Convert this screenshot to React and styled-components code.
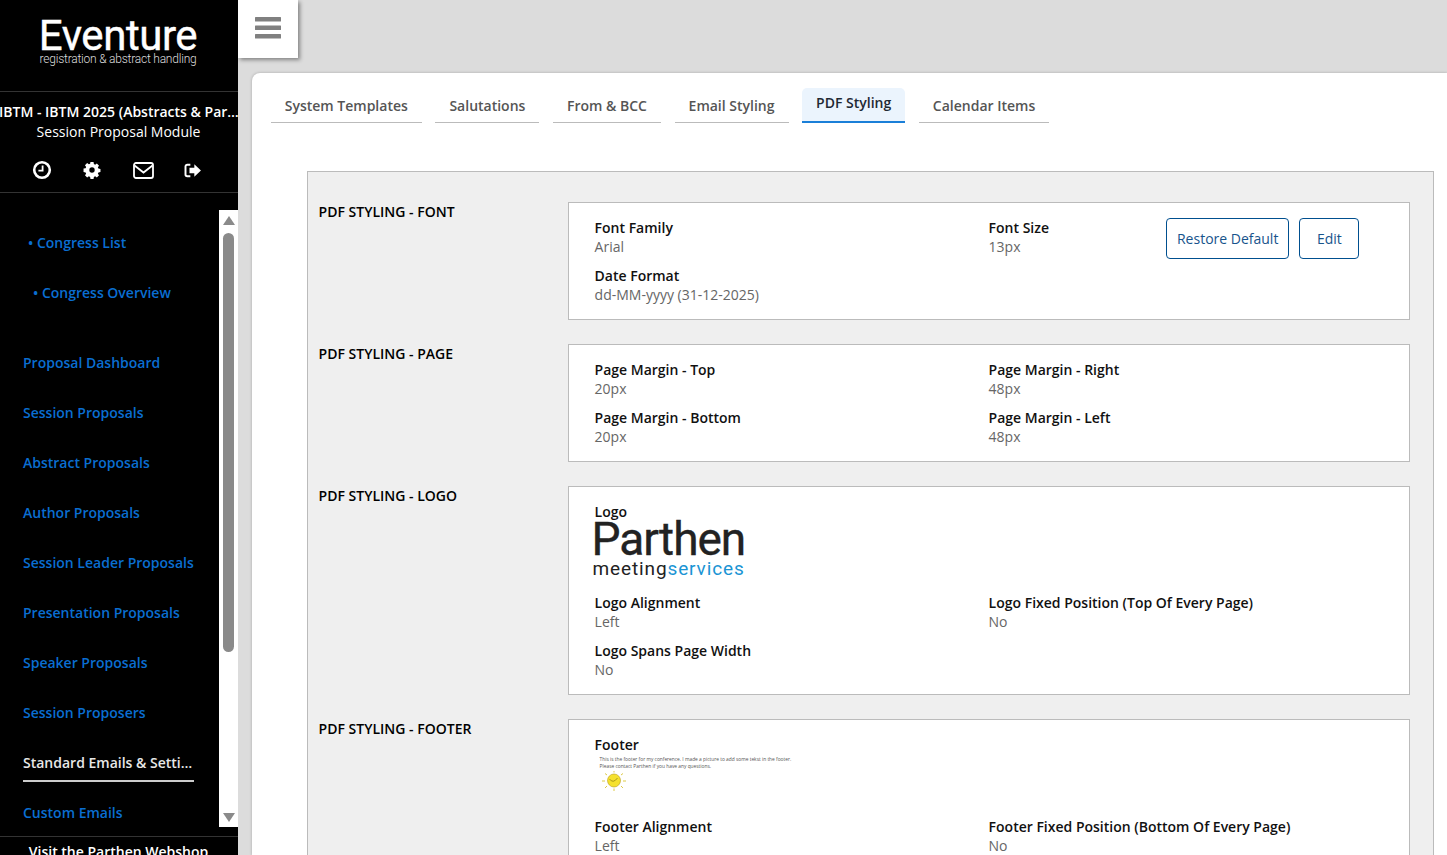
import React from "react";
import styled, { createGlobalStyle } from "styled-components";

const Global = createGlobalStyle`
  html, body { margin: 0; padding: 0; height: 855px; overflow: hidden; }
  * { box-sizing: border-box; }
  body { font-family: "Open Sans", "Liberation Sans", sans-serif; font-size: 14px; line-height: 19px; color: #000; }
`;

const Page = styled.div`
  display: flex;
  width: 1447px;
  height: 855px;
  overflow: hidden;
  background: #dcdcdc;
`;

const Sidebar = styled.aside`
  width: 238px;
  flex: none;
  height: 855px;
  background: #000;
  color: #fff;
  display: flex;
  flex-direction: column;
`;

const Brand = styled.div`
  height: 92px;
  flex: none;
  border-bottom: 1px solid #333;
  display: flex;
  flex-direction: column;
  align-items: center;
  padding: 16px 2px 0 0;
`;

const BrandName = styled.div`
  font-family: Roboto, "Liberation Sans", sans-serif;
  font-size: 42px;
  font-weight: 400;
  line-height: 40px;
  letter-spacing: -0.45px;
  color: #fff;
  -webkit-text-stroke: 0.4px #fff;
`;

const BrandTag = styled.div`
  font-family: Roboto, "Liberation Sans", sans-serif;
  font-size: 12px;
  font-weight: 300;
  line-height: 11px;
  letter-spacing: -0.22px;
  color: #ddd;
  margin-top: -2px;
`;

const Congress = styled.div`
  flex: none;
  height: 101px;
  border-bottom: 1px solid #333;
  padding-top: 10px;
  text-align: center;
`;

const CongressTitle = styled.div`
  font-weight: 600;
  white-space: nowrap;
  overflow: hidden;
  text-overflow: ellipsis;
  line-height: 20px;
  margin: 0 -1px;
`;

const CongressModule = styled.div`
  line-height: 20px;
  padding-right: 1px;
`;

const IconRow = styled.div`
  display: flex;
  justify-content: center;
  align-items: center;
  gap: 30.5px;
  margin-top: 18px;
  height: 20px;
  padding-right: 4px;
`;

const NavArea = styled.div`
  flex: none;
  margin-top: 17px;
  height: 617px;
  display: flex;
`;

const NavList = styled.nav`
  flex: 1;
  min-width: 0;
  overflow: hidden;
  padding-top: 8px;
`;

const NavItem = styled.a`
  display: block;
  height: 50px;
  line-height: 50px;
  padding-left: ${p => p.$pad || 23}px;
  color: #0a6ed1;
  font-weight: 600;
  white-space: nowrap;
  margin-bottom: ${p => p.$mb || 0}px;
`;

const ActiveItem = styled.a`
  display: block;
  margin: 3px 25px 6px 23px;
  height: 41px;
  padding-top: 12px;
  color: #e8e8e8;
  font-weight: 600;
  white-space: nowrap;
  overflow: hidden;
  text-overflow: ellipsis;
  border-bottom: 2px solid #ccc;
`;

const Scrollbar = styled.div`
  width: 19px;
  flex: none;
  background: #fff;
  display: flex;
  flex-direction: column;
  align-items: center;
  padding: 6px 0 5px;
`;

const ArrowUp = styled.div`
  width: 0;
  height: 0;
  border-left: 6.5px solid transparent;
  border-right: 6.5px solid transparent;
  border-bottom: 9px solid #8a8a8a;
  flex: none;
`;

const ArrowDown = styled(ArrowUp)`
  border-bottom: 0;
  border-top: 9px solid #8a8a8a;
  margin-top: auto;
`;

const Thumb = styled.div`
  width: 11px;
  height: 419px;
  margin-top: 8px;
  background: #8a8a8a;
  border-radius: 6px;
  flex: none;
`;

const SideFoot = styled.div`
  flex: none;
  margin-top: 9px;
  border-top: 1px solid #333;
  padding: 5px 1px 0 0;
  text-align: center;
  font-weight: 600;
  white-space: nowrap;
  color: #fff;
`;

const Main = styled.main`
  flex: 1;
  min-width: 0;
  display: flex;
  flex-direction: column;
`;

const TopBar = styled.div`
  height: 73px;
  flex: none;
`;

const MenuButton = styled.button`
  width: 60px;
  height: 58px;
  border: 0;
  padding: 17px 0 0;
  background: #fff;
  box-shadow: 2px 2px 4px rgba(0, 0, 0, 0.4);
  display: flex;
  align-items: flex-start;
  justify-content: center;
`;

const Content = styled.div`
  flex: 1;
  margin-left: 14px;
  background: #fff;
  border-radius: 8px 0 0 0;
  box-shadow: 0 0 3px rgba(0, 0, 0, 0.25);
  padding: 15px 13px 0 19px;
  overflow: hidden;
`;

const Tabs = styled.div`
  display: flex;
  align-items: flex-end;
  height: 35px;
  gap: 13.6px;
  margin-left: -0.3px;
`;

const Tab = styled.div`
  padding: 0 14px;
  height: ${p => (p.$active ? 35 : 31)}px;
  line-height: ${p => (p.$active ? 30 : 27)}px;
  color: ${p => (p.$active ? "#1f2933" : "#555")};
  background: ${p => (p.$active ? "#ebf4fd" : "transparent")};
  border-bottom: ${p => (p.$active ? "2px solid #1a7fd8" : "1px solid #bbb")};
  border-radius: ${p => (p.$active ? "5px 5px 0 0" : "0")};
  font-weight: 600;
  white-space: nowrap;
`;

const Panel = styled.section`
  margin: 48px 0 0 36px;
  background: #efefef;
  border: 1px solid #bbb;
  padding: 30px 23px 0 10.6px;
  height: 720px;
`;

const Row = styled.div`
  display: flex;
  margin-bottom: 24px;
`;

const RowLabel = styled.div`
  width: 249.4px;
  flex: none;
  font-weight: 600;
  text-transform: uppercase;
`;

const Card = styled.div`
  flex: 1;
  min-width: 0;
  background: #fff;
  border: 1px solid #bbb;
  padding: 15px 26px 15px 25.6px;
  display: grid;
  grid-template-columns: ${p => (p.$withActions ? "394px 177.4px 1fr" : "394px 1fr")};
  row-gap: 10px;
`;

const Field = styled.div`
  grid-column: ${p => p.$span || "auto"};
`;

const FieldLabel = styled.div`
  font-weight: 600;
  color: #111;
`;

const FieldValue = styled.div`
  color: #666;
`;

const Actions = styled.div`
  display: flex;
  gap: 10px;
  align-items: flex-start;
  height: 38px;
`;

const OutlineButton = styled.button`
  height: 41px;
  padding: 0 10px;
  font: 400 14px/19px "Open Sans", sans-serif;
  color: #17548c;
  background: #fff;
  border: 1px solid #004f8f;
  border-radius: 4px;
  white-space: nowrap;
  flex: none;
`;

const EditButton = styled(OutlineButton)`
  width: 60px;
`;

const LogoField = styled.div`
  grid-column: 1 / -1;
  height: 80.5px;
`;

const LogoImage = styled.div`
  margin: 1px 0 0 -3px;
  width: 156px;
`;

const LogoName = styled.div`
  font-family: Roboto, "Liberation Sans", sans-serif;
  font-size: 46px;
  font-weight: 400;
  line-height: 34px;
  letter-spacing: -1px;
  color: #222;
  -webkit-text-stroke: 0.4px #222;
`;

const LogoSub = styled.div`
  font-family: Roboto, "Liberation Sans", sans-serif;
  font-size: 19px;
  font-weight: 400;
  line-height: 14px;
  letter-spacing: 0.87px;
  margin: 6px 0 0 1px;
  color: #222;
  white-space: nowrap;
  span { color: #1a94d4; }
`;

const FooterField = styled.div`
  grid-column: 1 / -1;
  height: 72px;
`;

const FooterImage = styled.div`
  margin: 2.5px 0 0 5px;
  width: 200px;
  font-family: "Open Sans", sans-serif;
  font-size: 4.85px;
  line-height: 7px;
  color: #555;
  white-space: nowrap;
`;

const Sun = styled.svg`
  display: block;
  margin: 0.5px 0 0 1px;
`;

const Clock = () => (
  <svg width="20" height="20" viewBox="0 0 20 20" fill="none">
    <circle cx="10" cy="10" r="7.8" stroke="#fff" strokeWidth="2.6" />
    <path d="M10.6 5.4v5.2H6.4" stroke="#fff" strokeWidth="1.8" />
  </svg>
);

const Gear = () => (
  <svg width="20" height="20" viewBox="0 0 20 20">
    <path
      fill="#fff"
      fillRule="evenodd"
      d="M8.3 1.6h3.4l.4 2.3 1.4.6 1.9-1.3 2.4 2.4-1.3 1.9.6 1.4 2.3.4v3.4l-2.3.4-.6 1.4 1.3 1.9-2.4 2.4-1.9-1.3-1.4.6-.4 2.3H8.300l-.4-2.3-1.400-.6-1.900 1.300-2.400-2.400 1.300-1.900-.6-1.400-2.300-.4V8.900l2.300-.4.6-1.400-1.300-1.900 2.400-2.400 1.900 1.300 1.400-.6zM10 7.400a3 3 0 1 0 0 6 3 3 0 0 0 0-6z"
      transform="translate(1 0.600) scale(.9)"
    />
  </svg>
);

const Mail = () => (
  <svg width="21" height="17" viewBox="0 0 21 17" fill="none">
    <rect x="1" y="1" width="19" height="15" rx="2" stroke="#fff" strokeWidth="1.800" />
    <path d="M1.500 3.500l9 7 9-7" stroke="#fff" strokeWidth="1.800" />
  </svg>
);

const SignOut = () => (
  <svg width="18" height="15" viewBox="0 0 20 17" fill="none">
    <path d="M7 2H3.500A2 2 0 0 0 1.500 4v9a2 2 0 0 0 2 2H7" stroke="#fff" strokeWidth="2.200" />
    <path d="M11.500 1.500l7.500 7-7.500 7v-4H6v-6h5.500z" fill="#fff" />
  </svg>
);

const navItems = [
  "Proposal Dashboard",
  "Session Proposals",
  "Abstract Proposals",
  "Author Proposals",
  "Session Leader Proposals",
  "Presentation Proposals",
  "Speaker Proposals",
  "Session Proposers",
];

const tabs = ["System Templates", "Salutations", "From & BCC", "Email Styling", "PDF Styling", "Calendar Items"];

const F = ({ label, value, span }) => (
  <Field $span={span}>
    <FieldLabel>{label}</FieldLabel>
    <FieldValue>{value}</FieldValue>
  </Field>
);

export default function App() {
  return (
    <Page>
      <Global />
      <Sidebar>
        <Brand>
          <BrandName>Eventure</BrandName>
          <BrandTag>registration &amp; abstract handling</BrandTag>
        </Brand>
        <Congress>
          <CongressTitle>IBTM - IBTM 2025 (Abstracts &amp; Participants)</CongressTitle>
          <CongressModule>Session Proposal Module</CongressModule>
          <IconRow>
            <Clock />
            <Gear />
            <Mail />
            <SignOut />
          </IconRow>
        </Congress>
        <NavArea>
          <NavList>
            <NavItem $pad={28}>• Congress List</NavItem>
            <NavItem $pad={33} $mb={20}>• Congress Overview</NavItem>
            {navItems.map(n => (
              <NavItem key={n}>{n}</NavItem>
            ))}
            <ActiveItem>Standard Emails &amp; Settings</ActiveItem>
            <NavItem>Custom Emails</NavItem>
          </NavList>
          <Scrollbar>
            <ArrowUp />
            <Thumb />
            <ArrowDown />
          </Scrollbar>
        </NavArea>
        <SideFoot>Visit the Parthen Webshop</SideFoot>
      </Sidebar>
      <Main>
        <TopBar>
          <MenuButton aria-label="Menu">
            <svg width="26" height="22" viewBox="0 0 26 22">
              <rect y="0" width="26" height="4.500" rx="0.500" fill="#808080" />
              <rect y="8.500" width="26" height="4.500" rx="0.500" fill="#808080" />
              <rect y="17" width="26" height="4.500" rx="0.500" fill="#808080" />
            </svg>
          </MenuButton>
        </TopBar>
        <Content>
          <Tabs>
            {tabs.map(t => (
              <Tab key={t} $active={t === "PDF Styling"}>{t}</Tab>
            ))}
          </Tabs>
          <Panel>
            <Row>
              <RowLabel>PDF Styling - Font</RowLabel>
              <Card $withActions>
                <F label="Font Family" value="Arial" />
                <F label="Font Size" value="13px" />
                <Actions>
                  <OutlineButton>Restore Default</OutlineButton>
                  <EditButton>Edit</EditButton>
                </Actions>
                <F label="Date Format" value="dd-MM-yyyy (31-12-2025)" span="1 / -1" />
              </Card>
            </Row>
            <Row>
              <RowLabel>PDF Styling - Page</RowLabel>
              <Card>
                <F label="Page Margin - Top" value="20px" />
                <F label="Page Margin - Right" value="48px" />
                <F label="Page Margin - Bottom" value="20px" />
                <F label="Page Margin - Left" value="48px" />
              </Card>
            </Row>
            <Row>
              <RowLabel>PDF Styling - Logo</RowLabel>
              <Card>
                <LogoField>
                  <FieldLabel>Logo</FieldLabel>
                  <LogoImage>
                    <LogoName>Parthen</LogoName>
                    <LogoSub>meeting<span>services</span></LogoSub>
                  </LogoImage>
                </LogoField>
                <F label="Logo Alignment" value="Left" />
                <F label="Logo Fixed Position (Top Of Every Page)" value="No" />
                <F label="Logo Spans Page Width" value="No" span="1 / -1" />
              </Card>
            </Row>
            <Row>
              <RowLabel>PDF Styling - Footer</RowLabel>
              <Card>
                <FooterField>
                  <FieldLabel>Footer</FieldLabel>
                  <FooterImage>
                    This is the footer for my conference. I made a picture to add some tekst in the footer.
                    <br />
                    Please contact Parthen if you have any questions.
                    <Sun width="26" height="20" viewBox="0 0 26 20">
                      <circle cx="13" cy="9.500" r="6.500" fill="#f5e12e" stroke="#b89a10" strokeWidth="0.600" />
                      <path d="M8.500 8q3.500 5 8-1" fill="none" stroke="#8a7a10" strokeWidth="0.700" />
                      <path
                        d="M13 0v1.500M13 17.500V20M4 2.500l2 1.500M22 2.500l-2 1.500M1 10h3M22 10h3M4 17l2-2M22 17l-2-2"
                        stroke="#d9c534"
                        strokeWidth="0.900"
                      />
                    </Sun>
                  </FooterImage>
                </FooterField>
                <F label="Footer Alignment" value="Left" />
                <F label="Footer Fixed Position (Bottom Of Every Page)" value="No" />
              </Card>
            </Row>
          </Panel>
        </Content>
      </Main>
    </Page>
  );
}
